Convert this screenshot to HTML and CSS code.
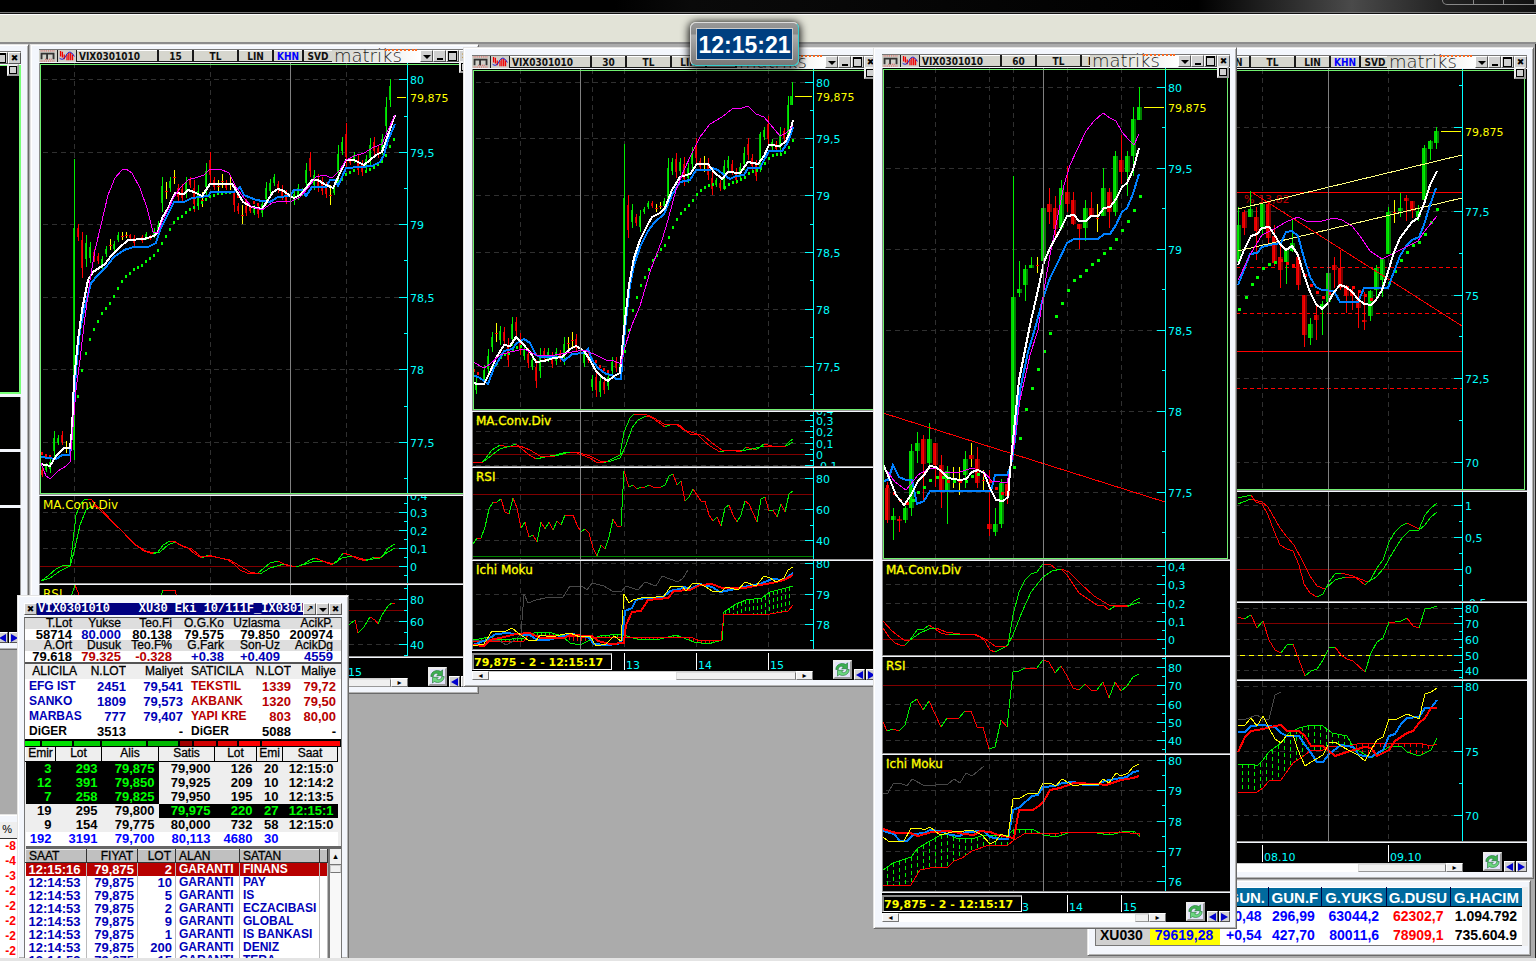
FILE: index.html
```
<!DOCTYPE html>
<html lang="tr">
	<head>
		<meta charset="UTF-8">
		<title>Matriks</title>
		<link rel="stylesheet" href="styles.css">
	</head>
	<body>
		<svg class="defs" width="0" height="0">
			<symbol id="ico-m" viewBox="0 0 18 13">
				<path d="M1 1h16" stroke="#e04040" stroke-dasharray="1 1"/>
				<path d="M1 12h16M6 10h7" stroke="#e04040" stroke-dasharray="1 1"/>
				<path d="M2 10V4h13v6M8 4v6" fill="none" stroke="#333" stroke-width="2"/>
			</symbol>
			<symbol id="ico-wave" viewBox="0 0 18 13">
				<path d="M2 1v6M4 2v6M6 5v5M9 5v6M11 3v8M13 3v8M15 5v6" stroke="#f00000" stroke-width="1.4"/>
				<path d="M1 9c3 2 5 1 7-3s5-6 9 1" fill="none" stroke="#0000d0"/>
			</symbol>
			<symbol id="ico-refresh" viewBox="0 0 18 18">
				<path d="M1 9C1 3 8 0 13 3l2-2v7H8l2-2C7 4 4 6 4 9z" fill="#3cb050" stroke="#1c7030" stroke-width=".7"/>
				<path d="M17 9c0 6-7 9-12 6l-2 2v-7h7l-2 2c3 2 6 0 6-3z" fill="#6cd880" stroke="#1c7030" stroke-width=".7"/>
			</symbol>
		</svg>

		<div class="topbar"><div class="syscontrols"><i></i><i></i><i></i></div></div>
		<div class="toolbar"></div>

		<div class="desktop">
			<div class="win win-left">
				<div class="head"><button class="hb max"></button><button class="hb">&#10006;</button></div>
				<div class="leftpane leftprice"><button class="square"></button></div>
				<div class="leftpane p1"></div>
				<div class="leftpane p2"></div>
				<div class="leftpane p3"></div>
				<div class="nav"><button class="arrow prev"></button><button class="arrow next"></button></div>
			</div>

			<div class="win win-list">
				<table>
					<thead><tr><th>%</th></tr></thead>
					<tbody>
						<tr><td>-8</td></tr>
						<tr><td>-4</td></tr>
						<tr><td>-3</td></tr>
						<tr><td>-2</td></tr>
						<tr><td>-2</td></tr>
						<tr><td>-2</td></tr>
						<tr><td>-2</td></tr>
						<tr><td>-2</td></tr>
					</tbody>
				</table>
			</div>

			<div class="win chart win-15" data-chart="c15">
				<div class="head">
					<div class="tabs">
						<svg class="hi"><use href="#ico-m"/></svg><svg class="hi"><use href="#ico-wave"/></svg>
						<button class="name">VIX0301010</button><button class="tf">15</button><button class="cur">TL</button><button class="lin">LIN</button><button class="khn">KHN</button><button class="svd">SVD</button>
					</div>
					<div class="logo">matriks</div>
					<button class="hb down"></button><button class="hb min"></button><button class="hb max"></button><button class="hb">&#10006;</button>
				</div>
				<button class="square"></button>
				<div class="panes"></div>
				<div class="foot">
					<div class="timeline">
						<div class="scroll"><button>&#9666;</button><span class="track"><span class="thumb"></span></span><button>&#9656;</button></div>
					</div>
					<div class="nav"><button class="refresh"><svg><use href="#ico-refresh"/></svg></button><button class="arrow prev"></button><button class="arrow next"></button></div>
				</div>
			</div>

			<div class="win chart win-30" data-chart="c30">
				<div class="head">
					<div class="tabs">
						<svg class="hi"><use href="#ico-m"/></svg><svg class="hi"><use href="#ico-wave"/></svg>
						<button class="name">VIX0301010</button><button class="tf">30</button><button class="cur">TL</button><button class="lin">LIN</button><button class="khn">KHN</button><button class="svd">SVD</button>
					</div>
					<div class="logo">matriks</div>
					<button class="hb down"></button><button class="hb min"></button><button class="hb max"></button><button class="hb">&#10006;</button>
				</div>
				<button class="square"></button>
				<div class="panes"></div>
				<div class="foot">
					<div class="timeline">
						<div class="last">79,875 - 2 - 12:15:17</div>
						<div class="scroll"><button>&#9666;</button><span class="track"><span class="thumb wide"></span></span><button>&#9656;</button></div>
					</div>
					<div class="nav"><button class="refresh"><svg><use href="#ico-refresh"/></svg></button><button class="arrow prev"></button><button class="arrow next"></button></div>
				</div>
			</div>

			<div class="win win-index">
				<table>
					<colgroup><col class="i1"><col class="i2"><col class="i3"><col class="i4"><col class="i5"><col class="i5"><col class="i7"></colgroup>
					<thead><tr><th></th><th></th><th>GUN.</th><th>GUN.F</th><th>G.YUKS</th><th>G.DUSU</th><th>G.HACIM</th></tr></thead>
					<tbody>
						<tr><td class="sym"></td><td></td><td>+0,48</td><td>296,99</td><td>63044,2</td><td class="red">62302,7</td><td class="blk">1.094.792</td></tr>
						<tr><td class="sym">XU030</td><td class="hot">79619,28</td><td>+0,54</td><td>427,70</td><td>80011,6</td><td class="red">78909,1</td><td class="blk">735.604.9</td></tr>
					</tbody>
				</table>
			</div>

			<div class="win chart win-day" data-chart="cday">
				<div class="head">
					<div class="tabs">
						<svg class="hi"><use href="#ico-m"/></svg><svg class="hi"><use href="#ico-wave"/></svg>
						<button class="name">VIX0301010</button><button class="tf">SEN</button><button class="cur">TL</button><button class="lin">LIN</button><button class="khn">KHN</button><button class="svd">SVD</button>
					</div>
					<div class="logo">matriks</div>
					<button class="hb down"></button><button class="hb min"></button><button class="hb max"></button><button class="hb">&#10006;</button>
				</div>
				<button class="square"></button>
				<div class="panes"></div>
				<div class="foot">
					<div class="timeline">
						<div class="scroll"><button>&#9666;</button><span class="track"><span class="thumb mid"></span></span><button>&#9656;</button></div>
					</div>
					<div class="nav"><button class="refresh"><svg><use href="#ico-refresh"/></svg></button><button class="arrow prev"></button><button class="arrow next"></button></div>
				</div>
			</div>

			<div class="win chart win-60" data-chart="c60">
				<div class="head">
					<div class="tabs">
						<svg class="hi"><use href="#ico-m"/></svg><svg class="hi"><use href="#ico-wave"/></svg>
						<button class="name">VIX0301010</button><button class="tf">60</button><button class="cur">TL</button><button class="lin">LIN</button>
					</div>
					<div class="logo">matriks</div>
					<button class="hb down"></button><button class="hb min"></button><button class="hb max"></button><button class="hb">&#10006;</button>
				</div>
				<button class="square"></button>
				<div class="panes"></div>
				<div class="foot">
					<div class="timeline">
						<div class="last">79,875 - 2 - 12:15:17</div>
						<div class="scroll"><button>&#9666;</button><span class="track"><span class="thumb small"></span></span><button>&#9656;</button></div>
					</div>
					<div class="nav"><button class="refresh"><svg><use href="#ico-refresh"/></svg></button><button class="arrow prev"></button><button class="arrow next"></button></div>
				</div>
			</div>

			<div class="win win-order">
				<div class="ohead">
					<button class="hb">&#10006;</button>
					<div class="otitle">VIX0301010&nbsp;&nbsp;&nbsp;&nbsp;XU30 Eki 10/111F_IX03010</div>
					<button class="hb">&#8599;</button><button class="hb down"></button><button class="hb">&#10006;</button>
				</div>
				<div class="obody">
					<table class="info">
						<colgroup><col class="a1"><col class="a2"><col class="a3"><col class="a4"><col class="a5"><col class="a6"></colgroup>
						<tr class="lbl"><th>T.Lot</th><th>Yukse</th><th>Teo.Fi</th><th>O.G.Ko</th><th>Uzlasma</th><th>AcikP.</th></tr>
						<tr><td>58714</td><td class="blue">80.000</td><td>80.138</td><td>79.575</td><td>79.850</td><td>200974</td></tr>
						<tr class="lbl"><th>A.Ort</th><th>Dusuk</th><th>Teo.F%</th><th>G.Fark</th><th>Son-Uz</th><th>AcikDg</th></tr>
						<tr><td>79.618</td><td class="red">79.325</td><td class="red">-0.328</td><td class="blue">+0.38</td><td class="blue">+0.409</td><td class="blue">4559</td></tr>
					</table>
					<table class="broker">
						<colgroup><col class="b1"><col class="b2"><col class="b3"><col class="b4"><col class="b5"><col class="b6"></colgroup>
						<tr class="lbl"><th>&nbsp;ALICILA</th><th>N.LOT</th><th>Maliyet</th><th>SATICILA</th><th>N.LOT</th><th>Maliye</th></tr>
						<tr><td class="blue">EFG IST</td><td class="blue">2451</td><td class="blue">79,541</td><td class="red">TEKSTIL</td><td class="red">1339</td><td class="red">79,72</td></tr>
						<tr><td class="blue">SANKO</td><td class="blue">1809</td><td class="blue">79,573</td><td class="red">AKBANK</td><td class="red">1320</td><td class="red">79,50</td></tr>
						<tr><td class="blue">MARBAS</td><td class="blue">777</td><td class="blue">79,407</td><td class="red">YAPI KRE</td><td class="red">803</td><td class="red">80,00</td></tr>
						<tr><td>DiGER</td><td>3513</td><td>-</td><td>DiGER</td><td>5088</td><td>-</td></tr>
					</table>
					<div class="balance">
						<i class="g1" style="flex-grow:15"></i><i class="g2" style="flex-grow:30"></i><i class="g3" style="flex-grow:26"></i><i class="g3" style="flex-grow:44"></i><i class="g4" style="flex-grow:30"></i><i class="r1" style="flex-grow:12"></i><i class="r2" style="flex-grow:22"></i><i class="r3" style="flex-grow:19"></i><i class="r4" style="flex-grow:21"></i><i class="r4" style="flex-grow:78"></i>
					</div>
					<table class="depth">
						<colgroup><col class="d1"><col class="d2"><col class="d3"><col class="d4"><col class="d5"><col class="d6"><col class="d7"><col></colgroup>
						<thead><tr><th>Emir</th><th>Lot</th><th>Alis</th><th>Satis</th><th>Lot</th><th>Emi</th><th>Saat</th></tr></thead>
						<tbody>
							<tr><td class="on">3</td><td class="on">293</td><td class="on">79,875</td><td>79,900</td><td>126</td><td>20</td><td>12:15:0</td></tr>
							<tr><td class="on">12</td><td class="on">391</td><td class="on">79,850</td><td>79,925</td><td>209</td><td>10</td><td>12:14:2</td></tr>
							<tr><td class="on">7</td><td class="on">258</td><td class="on">79,825</td><td>79,950</td><td>195</td><td>10</td><td>12:13:5</td></tr>
							<tr><td>19</td><td>295</td><td>79,800</td><td class="on">79,975</td><td class="on">220</td><td class="on">27</td><td class="on">12:15:1</td></tr>
							<tr><td>9</td><td>154</td><td>79,775</td><td>80,000</td><td>732</td><td>58</td><td>12:15:0</td></tr>
							<tr class="sum"><td>192</td><td>3191</td><td>79,700</td><td>80,113</td><td>4680</td><td>30</td><td></td></tr>
						</tbody>
					</table>
					<div class="tapewrap">
						<table class="tape">
							<colgroup><col class="t1"><col class="t2"><col class="t3"><col class="t4"><col class="t5"><col class="t6"></colgroup>
							<thead><tr><th>SAAT</th><th>FIYAT</th><th>LOT</th><th>ALAN</th><th>SATAN</th><th></th></tr></thead>
							<tbody>
								<tr class="sel"><td>12:15:16</td><td>79,875</td><td>2</td><td>GARANTI</td><td>FINANS</td><td></td></tr>
								<tr><td>12:14:53</td><td>79,875</td><td>10</td><td>GARANTI</td><td>PAY</td><td></td></tr>
								<tr><td>12:14:53</td><td>79,875</td><td>5</td><td>GARANTI</td><td>IS</td><td></td></tr>
								<tr><td>12:14:53</td><td>79,875</td><td>2</td><td>GARANTI</td><td>ECZACIBASI</td><td></td></tr>
								<tr><td>12:14:53</td><td>79,875</td><td>9</td><td>GARANTI</td><td>GLOBAL</td><td></td></tr>
								<tr><td>12:14:53</td><td>79,875</td><td>1</td><td>GARANTI</td><td>IS BANKASI</td><td></td></tr>
								<tr><td>12:14:53</td><td>79,875</td><td>200</td><td>GARANTI</td><td>DENIZ</td><td></td></tr>
								<tr><td>12:14:53</td><td>79,875</td><td>15</td><td>GARANTI</td><td>TERA</td><td></td></tr>
							</tbody>
						</table>
						<div class="vscroll"><button>&#9652;</button><span></span></div>
					</div>
				</div>
			</div>
		</div>
		<div class="status"></div>
		<div class="clock"><span>12:15:21</span></div>
		<script src="charts.js"></script>
	</body>
</html>
```
FILE: styles.css
```
*{
	box-sizing: border-box;
}
body{
	margin: 0;
	height: 100vh;
	overflow: hidden;
	display: flex;
	flex-direction: column;
	position: relative;
	background: #ababab;
	font-family: "Liberation Sans", sans-serif;
}
button{
	margin: 0;
	padding: 0;
	border: 0;
	font: inherit;
	color: inherit;
	background: #d6d6ce;
}
table{
	border-collapse: collapse;
	table-layout: fixed;
}
th,td{
	padding: 0;
	white-space: nowrap;
	overflow: hidden;
}
.defs{
	position: absolute;
}
.topbar{
	height: 14px;
	flex: none;
	background: linear-gradient(90deg,#000 0,#000 40%,#0a0a0a 45%,#000 78%,#4a4a4a 88%,#222 94%,#111 100%);
	border-bottom: 1px solid #111;
	box-shadow: inset 0 -1px 0 #777;
}
.syscontrols{
	display: flex;
	width: 94px;
	height: 5px;
	margin-left: auto;
	border: 1px solid #888;
	border-top: 0;
	border-radius: 0 0 0 5px;
}
.syscontrols i{
	flex: 1;
	border-right: 1px solid #888;
}
.toolbar{
	height: 30px;
	flex: none;
	background: #e2e3d7;
	border-top: 1px solid #fff;
	border-bottom: 2px solid #8c8c8c;
}
.desktop{
	flex: 1;
	position: relative;
	overflow: hidden;
	background: #ababab;
	border-right: 1px solid #222;
}
.status{
	height: 3px;
	flex: none;
	background: #e4e4e4;
}

/* windows */
.win{
	position: absolute;
	background: #f3f6fc;
	border: 1px solid #e3e3e3;
	border-right-color: #6a6a6a;
	border-bottom-color: #6a6a6a;
	box-shadow: inset 1px 1px 0 #fff, inset -1px -1px 0 #b4b4b4;
}
.chart{
	padding: 7px 6px 6px 8px;
}
.win-15{
	left: 30px;
	top: 0;
	width: 449px;
	padding-top: 4px;
}
.win-30{
	left: 463px;
	top: 3px;
	width: 421px;
}
.win-60{
	left: 873px;
	top: 3px;
	width: 364px;
	padding-top: 6px;
}
.win-day{
	left: 1087px;
	top: 3px;
	width: 447px;
}
.head{
	display: flex;
	height: 13px;
	margin-bottom: 1px;
	background: #1a1a1a;
	border-top: 1px solid #777;
	font: bold 10px/12px "DejaVu Sans Condensed", "DejaVu Sans", sans-serif;
}
.tabs{
	flex: 1;
	display: flex;
	overflow: hidden;
}
.tabs button{
	flex: none;
	margin-right: 2px;
	height: 11px;
	line-height: 12px;
	overflow: hidden;
	border-top: 1px solid #fff;
	color: #111;
}
.hi{
	flex: none;
	width: 18px;
	height: 12px;
	margin-right: 1px;
	background: #cfcfc8;
}
.tabs .name{
	width: 80px;
	padding-left: 2px;
	text-align: left;
}
.tabs .tf{
	width: 33px;
}
.tabs .cur{
	width: 43px;
}
.tabs .lin{
	width: 33px;
}
.win-60 .tabs .lin{
	padding-left: 6px;
	text-align: left;
}
.tabs .khn{
	width: 28px;
	color: #00f;
}
.tabs .svd{
	width: 28px;
}
.logo{
	flex: none;
	width: 88px;
	height: 12px;
	padding-left: 2px;
	background: linear-gradient(90deg,#d4d4cc,#fff);
	color: #222;
	font: 200 18px/11px "DejaVu Sans", sans-serif;
	position: relative;
}
.logo::after{
	content: "";
	position: absolute;
	left: 53px;
	top: -1px;
	width: 32px;
	border-top: 2px dotted #ff6a20;
}
.hb{
	flex: none;
	width: 13px;
	height: 12px;
	border: 1px solid #fff;
	border-right-color: #555;
	border-bottom-color: #555;
	background: #d0d0d0;
	color: #000;
	font: bold 9px/9px "DejaVu Sans", sans-serif;
	text-align: center;
	overflow: hidden;
}
.down::before{
	content: "";
	display: block;
	margin: 1px auto 0;
	width: 0;
	border: 4px solid transparent;
	border-top-color: #000;
	border-bottom: 0;
}
.min::before{
	content: "";
	display: block;
	width: 6px;
	height: 2px;
	margin: 6px auto 0;
	background: #000;
}
.max::before{
	content: "";
	display: block;
	width: 7px;
	height: 7px;
	margin: 0 auto;
	border: 1px solid #000;
	border-top-width: 2px;
}
.square{
	position: absolute;
	right: 7px;
	margin-top: -2px;
	width: 12px;
	height: 12px;
	border: 2px outset #eee;
	background: #d0d0d0;
}
.square::before{
	content: "";
	display: block;
	width: 6px;
	height: 6px;
	margin: 0 auto;
	border: 1px solid #000;
}
.pane{
	display: block;
	width: 100%;
	background: #000;
	shape-rendering: crispEdges;
	font: 11px "DejaVu Sans", sans-serif;
}
.panes .pane{
	margin-bottom: 2px;
	box-shadow: 0 1px 0 #999;
}
.title,.thin{
	font-size: 12px;
}
.title{
	stroke: #ff0;
	stroke-width: .3px;
}
.foot{
	display: flex;
	height: 29px;
	background: #000;
}
.timeline{
	flex: 1;
	position: relative;
	display: flex;
	flex-direction: column;
}
.timeline .pane{
	overflow: visible;
}
.last{
	position: absolute;
	left: 0;
	top: 2px;
	width: 140px;
	height: 17px;
	background: #000;
	border: 1px solid #fff;
	border-top: 2px solid #8a8a8a;
	border-left: 2px solid #8a8a8a;
	color: #ff0;
	font: bold 11px/15px "DejaVu Sans", sans-serif;
	white-space: nowrap;
	overflow: hidden;
}
.scroll{
	display: flex;
	height: 9px;
	margin-top: auto;
}
.scroll button{
	width: 17px;
	background: #f0f0f0;
	border: 1px solid #fff;
	border-right-color: #777;
	border-bottom-color: #777;
	font: 8px/7px "DejaVu Sans", sans-serif;
}
.track{
	flex: 1;
	display: flex;
	background: #fff;
	border-top: 1px solid #ccc;
}
.thumb{
	width: 90px;
	margin-left: auto;
	background: #f0f0f0;
	border: 1px solid #ddd;
	border-right-color: #777;
	border-bottom-color: #999;
}
.thumb.wide{
	width: 120px;
}
.thumb.mid{
	width: 88px;
}
.thumb.small{
	width: 14px;
}
.nav{
	flex: none;
	display: flex;
	align-items: flex-end;
	justify-content: flex-end;
	gap: 1px;
	width: 64px;
}
.refresh{
	width: 19px;
	height: 19px;
	margin: 0 1px 1px 0;
	border: 2px outset #eee;
	background: #e4e4fa;
}
.refresh svg{
	display: block;
	width: 15px;
	height: 15px;
}
.arrow{
	width: 11px;
	height: 11px;
	border: 1px solid #fff;
	border-right-color: #555;
	border-bottom-color: #555;
	background: #d0d0d0;
}
.arrow::before{
	content: "";
	display: block;
	width: 0;
	margin: 0 auto;
	border: 4px solid transparent;
}
.prev::before{
	border-right: 7px solid #00c;
	border-left: 0;
}
.next::before{
	border-left: 7px solid #00c;
	border-right: 0;
}

/* clipped windows at the left edge */
.win-left{
	left: -60px;
	top: 0;
	width: 89px;
	padding: 6px 7px 6px;
}
.win-left .head{
	justify-content: flex-end;
}
.win-left .square{
	right: 9px;
}
.leftpane{
	margin-bottom: 3px;
	background: #000;
	border-right: 1px solid #999;
}
.leftprice{
	height: 329px;
	border: 1px solid #7f7;
	border-width: 1px 2px 2px 0;
}
.p1{
	height: 52px;
}
.p2{
	height: 53px;
}
.p3{
	height: 124px;
	margin-bottom: 0;
}
.win-left .nav{
	width: auto;
	padding-right: 1px;
	background: #000;
}
.win-list{
	left: -60px;
	top: 770px;
	width: 85px;
	height: 140px;
	padding: 7px 6px 0;
	font: bold 12px/15px "Liberation Sans", sans-serif;
}
.win-list table{
	width: 100%;
	background: #fff;
}
.win-list th{
	height: 16px;
	padding-right: 6px;
	background: #eee;
	border-bottom: 1px solid #333;
	text-align: right;
	font-weight: normal;
	font-size: 11px;
}
.win-list td{
	height: 15px;
	padding-right: 2px;
	color: #f00;
	text-align: right;
}

/* index table */
.win-index{
	left: 1087px;
	top: 836px;
	width: 444px;
	height: 76px;
	padding: 6px 4px 6px 7px;
}
.win-index table{
	width: 433px;
	background: #fff;
	border: 1px solid #777;
	border-right: 6px solid #eee;
	font: bold 14px/19px "Liberation Sans", sans-serif;
	color: #00f;
}
.win-index th{
	height: 19px;
	padding-right: 3px;
	background: #006a9e;
	border: 1px solid #fff;
	border-right-color: #004;
	border-bottom-color: #000;
	color: #fff;
	font-size: 15px;
	line-height: 17px;
	text-align: right;
}
.win-index td{
	height: 19px;
	padding-right: 7px;
	text-align: right;
}
.win-index .sym{
	background: #d0d0d0;
	color: #000;
}
.win-index .hot{
	background: #ff0;
}
.win-index .red{
	color: #f00;
}
.win-index .blk{
	padding-right: 5px;
	color: #000;
}
.i1{
	width: 54px;
}
.i2{
	width: 70px;
}
.i3{
	width: 48px;
}
.i4{
	width: 53px;
}
.i5{
	width: 64px;
}
.i7{
	width: 74px;
}

/* order book */
.win-order{
	left: 17px;
	top: 551px;
	bottom: 0;
	width: 332px;
	padding: 7px 6px 0;
	border-bottom: 0;
	overflow: hidden;
}
.ohead{
	display: flex;
	height: 12px;
	background: navy;
}
.otitle{
	flex: 1;
	padding-left: 1px;
	color: #fff;
	font: bold 12px/12px "Liberation Mono", monospace;
	white-space: nowrap;
	overflow: hidden;
}
.obody{
	margin-top: 2px;
	background: #fff;
	border: 1px solid #777;
	border-top: 1px solid #555;
	font: bold 12px/14px "Liberation Sans", sans-serif;
	color: #000;
}
.obody table{
	width: 100%;
}
.blue{
	color: #0000b8;
}
.obody .red{
	color: #b80000;
}
.obody th{
	font-weight: normal;
	-webkit-text-stroke: .3px #000;
}
.info{
	border-bottom: 2px solid #555;
}
.info th,.info td{
	height: 11px;
	font-size: 12px;
	line-height: 12px;
	text-align: right;
	padding-right: 1px;
}
.info td{
	font-size: 13px;
	line-height: 11px;
}
.info .lbl{
	background: #dedede;
}
.info th{
	line-height: 11px;
}
.info th:last-child,.info td:last-child{
	padding-right: 8px;
}
.a1{
	width: 48px;
}
.a2{
	width: 49px;
}
.a3{
	width: 51px;
}
.a4{
	width: 52px;
}
.a5{
	width: 56px;
}
.broker th,.broker td{
	height: 15px;
	line-height: 15px;
	text-align: right;
}
.broker td{
	font-size: 13px;
}
.broker .lbl{
	background: #eee;
}
.broker th:nth-child(3n+1),.broker td:nth-child(3n+1){
	font-size: 12px;
	text-align: left;
	padding-left: 4px;
}
.broker th:nth-child(4),.broker td:nth-child(4){
	padding-left: 8px;
}
.broker th:last-child,.broker td:last-child{
	padding-right: 5px;
}
.b1{
	width: 59px;
}
.b2{
	width: 42px;
}
.b3{
	width: 57px;
}
.b4{
	width: 68px;
}
.b5{
	width: 40px;
}
.balance{
	display: flex;
	gap: 2px;
	height: 8px;
	padding: 2px 1px 1px 0;
	background: #000;
}
.balance i{
	flex-basis: 0;
}
.g1{
	background: #00f800;
}
.g2{
	background: #00e000;
}
.g3{
	background: #00cc00;
}
.g4{
	background: #00b800;
}
.r1{
	background: #a00000;
}
.r2{
	background: #d00000;
}
.r3{
	background: #e00000;
}
.r4{
	background: #f00;
}
.depth{
	background: #eee;
	border-bottom: 3px solid #666;
}
.depth th{
	height: 14px;
	line-height: 13px;
	border: 1px solid #fff;
	border-width: 0 1px 1px 1px;
	border-right-color: #000;
	border-bottom-color: #000;
}
.depth td{
	height: 14px;
	font-size: 13px;
	line-height: 14px;
	padding-right: 4px;
	text-align: right;
}
.depth .on{
	background: #000;
	color: #0f0;
}
.depth .sum{
	background: #fff;
	color: #00f;
}
.d1{
	width: 30px;
}
.d2{
	width: 46px;
}
.d3{
	width: 57px;
}
.d4{
	width: 56px;
}
.d5{
	width: 42px;
}
.d6{
	width: 26px;
}
.d7{
	width: 55px;
}
.tapewrap{
	display: flex;
}
.obody .tape{
	width: 303px;
	flex: none;
	color: #0000b8;
}
.tape th{
	height: 13px;
	line-height: 12px;
	padding: 0 4px 0 3px;
	background: #c0c0c0;
	border: 1px solid #eee;
	border-right-color: #333;
	border-bottom-color: #333;
	color: #000;
	text-align: left;
}
.tape td{
	height: 13px;
	line-height: 13px;
	padding: 0 3px;
	border-right: 1px solid #bbb;
}
.tape td:nth-child(-n+3){
	font-size: 13px;
}
.tape tr > :nth-child(2),.tape tr > :nth-child(3){
	text-align: right;
}
.sel td{
	background: #b80000;
	color: #fff;
}
.t1{
	width: 61px;
}
.t2{
	width: 51px;
}
.t3{
	width: 38px;
}
.t4{
	width: 64px;
}
.t5{
	width: 80px;
}
.vscroll{
	flex: 1;
	display: flex;
	flex-direction: column;
	background: #f8f8f8;
	border-left: 2px solid #777;
}
.vscroll button{
	height: 16px;
	background: #f0f0f0;
	border-bottom: 1px solid #777;
	font: 9px/14px "DejaVu Sans", sans-serif;
}
.vscroll span{
	height: 8px;
	border: 1px solid #ccc;
	border-bottom-color: #777;
	background: #f0f0f0;
}

.clock{
	position: absolute;
	left: 690px;
	top: 22px;
	width: 109px;
	height: 44px;
	padding: 5px;
	border: 1px solid #ddd;
	border-right-color: #3cc;
	border-bottom-color: #3cc;
	border-radius: 6px;
	background: linear-gradient(#999,#888 25%,#aaa 30%,#777);
	box-shadow: 0 1px 9px 1px #000;
}
.clock span{
	display: block;
	height: 32px;
	border: 1px solid #ccc;
	background: #003f80;
	color: #fff;
	font: bold 23px/33px "Liberation Sans", sans-serif;
	text-align: center;
}
```
FILE: charts.js
```
var RED="#f00",GREEN="#00f000",BLUE="#0080ff",WHITE="#fff",MAG="#f0f",YEL="#ff0",CYAN="#0ff",GRAY="#484848";

//mum satiri: x high low [bodyTop bodyBottom] renk
var charts={
	c15:{
		x0:39,x1:472,axis:407,cross:290,v:[74,210,346],body:2,len:10,foot:657,times:[[346,"15"]],
		panes:[
			{top:63,bottom:494,main:true,
				ticks:[[79,"80"],[152,"79,5"],[224,"79"],[297,"78,5"],[369,"78"],[442,"77,5"]],minor:[116,188,260,333,406,478],last:97,
				candles:"42 467 477 r,46 463 472 g,50 458 473 g,54 431 458 g,58 435 445 g,62 431 445 r,66 441 453 y,74 159 460 228 450 g,78 224 241 r,82 232 278 240 268 r,86 235 267 g,90 242 263 g,94 249 262 r,98 253 264 r,102 256 269 g,106 246 257 g,110 239 250 y,114 241 252 g,118 232 242 g,122 232 240 y,126 232 238 y,130 234 239 r,134 235 246 r,142 235 243 r,146 232 240 g,150 235 240 r,154 228 238 g,158 221 235 g,162 177 212 g,166 182 199 y,170 177 192 g,174 170 184 y,178 184 201 r,182 184 203 r,186 177 198 g,190 177 188 r,194 180 212 r,198 185 210 g,202 192 207 y,206 163 195 g,210 152 183 r,214 177 190 r,218 180 192 y,222 174 188 y,226 180 190 r,230 177 190 y,234 185 212 r,238 203 214 r,242 205 224 y,246 202 216 r,250 205 213 r,254 205 215 g,258 203 218 r,262 200 217 g,266 182 205 g,270 179 195 g,274 174 186 g,278 181 193 r,282 185 200 r,286 190 204 r,290 192 209 y,294 190 205 g,298 184 200 g,302 188 196 g,306 163 190 g,310 152 177 r,314 170 190 g,318 174 192 r,322 177 195 r,326 182 198 r,330 185 205 y,334 185 195 g,338 145 182 g,342 137 155 g,346 123 168 r,350 157 165 r,354 152 163 g,358 155 175 r,362 160 176 r,366 155 170 g,370 138 165 g,374 137 155 r,378 145 158 r,382 134 155 g,386 97 135 g,390 79 107 g",
				dots:[["g","74,425 78,396 82,370 86,353 90,339 94,329 98,321 102,313 106,308 110,303 114,296 118,288 122,281 126,276 130,273 134,269 138,267 142,265 146,261 150,258 154,255 158,250 162,243 166,236 170,229 174,222 178,218 182,216 186,212 190,209 194,207 198,204 202,202 206,199 210,196 214,195 218,193 222,193 226,192 230,192 338,182 342,179 346,174 350,172 354,170 366,171 370,169 374,167 378,164 382,161 386,155 390,146 394,139"],["r","42,453 46,455 50,456 238,196 246,200 254,202 258,204"]],
				lines:[
					[BLUE,2,"41,457 56,459 62,455 70,455 73,420 76,370 80,330 84,310 91,283 98,275 106,267 114,257 124,250 134,247 148,247 156,243 160,230 166,218 174,202 184,202 192,198 208,196 211,192 234,192 240,187 244,195 256,200 270,202 278,197 290,196 294,190 302,190 306,196 312,187 326,187 330,180 335,180 338,186 346,168 360,167 372,166 380,162 384,155 388,140 392,131 395,124"],
					[WHITE,2,"41,464 50,466 56,456 64,448 70,448 72,430 74,380 78,340 82,310 88,280 93,272 105,264 111,256 118,249 128,240 144,239 154,236 158,232 162,218 168,208 175,193 184,194 188,190 194,192 202,196 210,184 232,184 236,190 243,202 252,207 262,209 268,200 273,192 278,189 284,191 290,196 294,198 300,195 306,188 312,180 318,180 324,184 333,188 340,173 346,160 354,160 364,165 370,160 376,155 382,152 388,135 395,115"],
					[MAG,1,"41,463 46,476 50,479 58,471 66,466 70,462 72,440 76,390 80,360 84,325 90,280 95,250 101,225 108,195 115,178 122,170 126,169 132,173 140,188 147,208 153,232 158,233 162,222 168,210 174,197 180,188 188,180 198,177 204,175 210,169 220,169 229,173 236,187 244,198 252,207 262,210 272,203 280,201 290,202 300,197 308,188 316,177 324,175 332,178 340,170 346,160 354,156 364,153 374,147 382,144 388,130 395,115"]
				]},
			{top:496,bottom:583,title:"MA.Conv.Div",thin:true,
				ticks:[[495,"0,4"],[512,"0,3"],[530,"0,2"],[548,"0,1"],[566,"0"]],minor:[503,521,539,557,575],
				levels:[[566,"#800000"]],
				updown:["41,581 48,576 56,569 62,566 70,565 72,550 76,515 80,505 84,500 88,499 92,500 98,508 110,520 122,531 134,544 144,551 153,554 158,552 163,545 170,541 175,541 178,544 188,548 195,554 202,558 208,555 216,557 228,560 234,564 240,570 247,573 258,573 264,568 270,563 278,561 286,565 296,567 304,564 310,560 315,558 320,560 332,565 338,560 343,553 350,555 358,559 366,561 374,557 382,557 388,548 395,544","41,581 50,578 60,571 70,566 74,552 80,525 86,510 92,506 100,508 112,521 124,533 136,545 146,551 154,553 160,552 168,545 175,542 184,547 192,549 200,556 210,556 230,560 240,566 250,572 260,574 270,568 284,564 296,567 312,562 322,561 334,564 342,558 352,556 366,560 380,558 388,552 395,548"]},
			{top:585,bottom:656,title:"RSI",thin:true,
				ticks:[[599,"80"],[621,"60"],[644,"40"]],minor:[588,610,632,655],
				levels:[[610,"#800000"]],
				updown:["70,600 75,585 80,597","160,600 163,590 175,590 177,598","340,625 350,624 355,620 358,633 364,627 370,617 375,620 378,624 382,615 388,606 392,603 395,603"]}
		]
	},
	c30:{
		x0:472,x1:877,axis:813,cross:580,v:[520,592,624,696,768],body:2,len:18,foot:650,times:[[624,"13"],[696,"14"],[768,"15"]],
		panes:[
			{top:69,bottom:410,main:true,
				ticks:[[82,"80"],[138,"79,5"],[195,"79"],[252,"78,5"],[309,"78"],[366,"77,5"]],minor:[110,167,224,280,337,394],last:96,
				candles:"476 378 394 g,484 365 385 g,488 349 375 g,492 332 352 g,496 323 342 y,500 326 345 g,504 327 346 r,508 338 367 r,512 317 346 g,516 317 336 r,520 333 355 r,524 345 360 g,528 349 368 r,532 356 370 g,536 360 388 r,540 348 378 g,544 348 360 r,548 348 362 g,552 352 368 r,556 348 365 g,560 350 362 r,564 337 365 g,568 337 349 y,572 332 347 y,576 334 352 r,584 350 367 g,588 352 363 r,592 375 391 g,596 370 397 r,600 376 397 g,604 378 394 r,608 372 390 g,612 357 375 g,616 357 372 r,620 360 375 g,624 144 350 198 348 g,628 195 238 205 230 r,632 204 228 g,636 214 226 r,640 210 232 g,644 207 214 g,648 201 209 g,652 201 208 r,656 204 212 y,660 202 209 y,664 198 208 g,668 158 202 168 202 g,672 158 175 g,676 153 178 r,680 158 175 g,684 157 186 r,688 163 183 g,692 147 170 g,696 138 164 r,700 158 170 r,704 156 172 y,708 158 180 r,712 172 195 r,716 178 187 g,720 180 191 r,724 160 190 166 189 g,728 156 172 g,732 160 175 r,736 168 184 r,740 163 180 g,744 147 170 g,748 138 160 r,752 154 170 r,756 160 181 r,760 132 172 134 168 g,764 127 140 g,768 116 147 r,772 139 150 g,776 141 152 r,780 127 155 g,784 128 141 r,788 96 140 105 138 g,791 96 105 96 105 g,792 82 105 96 105 g",
				dots:[["g","625,351 629,330 633,310 637,297 641,285 645,277 649,269 653,260 657,255 661,249 665,245 669,237 673,227 677,219 681,213 685,209 689,205 693,200 697,194 701,190 705,187 709,185 713,184 725,187 729,184 733,182 737,181 741,179 745,177 749,173 753,171 757,170 761,168 765,163 769,158 773,155 777,154 781,154 785,152 789,147 793,140 489,373 493,367 497,363 501,357 505,354 509,353 513,349 517,347 521,346"],["r","474,370 478,373 528,349 536,354 596,361 600,366 604,369 608,371"]],
				lines:[
					[BLUE,2,"473,375 480,378 488,384 494,368 504,351 512,349 517,343 524,339 530,343 536,355 540,357 560,357 564,361 572,354 584,353 588,349 592,360 598,368 606,374 612,375 616,379 621,379 623,350 626,320 630,285 634,265 640,247 648,231 654,223 664,214 672,195 680,182 690,180 696,170 710,170 712,168 718,170 724,175 730,179 736,176 744,175 748,168 760,168 764,160 769,151 782,151 788,142 793,127"],
					[WHITE,2,"473,382 476,384 484,384 490,372 496,358 504,345 510,346 516,337 522,343 530,352 536,362 544,361 554,358 562,357 570,349 576,346 584,351 590,360 596,371 602,377 608,381 614,376 620,373 622,350 625,320 629,285 634,258 640,240 648,224 652,217 660,213 665,208 672,190 680,177 690,174 697,164 708,164 714,172 722,179 728,172 740,173 748,162 758,164 764,156 769,145 780,146 786,141 790,132 793,120"],
					[MAG,1,"473,362 484,368 490,364 500,355 510,352 524,349 536,355 550,356 566,353 584,350 596,355 606,360 614,361 621,364 624,350 632,325 640,306 650,272 662,240 668,220 676,190 684,170 692,153 700,137 710,124 722,117 732,109 742,108 748,106 756,114 764,117 770,124 780,136 786,133 793,126"]
				]},
			{top:412,bottom:466,title:"MA.Conv.Div",
				ticks:[[410,"0,4"],[420,"0,3"],[431,"0,2"],[443,"0,1"],[454,"0"],[465,"-0,1"]],minor:[415,426,437,449,460],
				levels:[[454,"#800000"]],
				updown:["473,462 481,463 486,458 492,450 500,445 508,447 516,444 522,449 528,454 536,459 545,457 556,455 566,452 574,452 582,455 590,458 596,462 604,463 612,459 620,455 624,432 630,418 634,414 644,414 650,416 658,422 665,427 672,424 678,424 684,429 690,434 697,434 704,441 710,446 720,452 728,450 736,451 742,451 746,447 756,450 764,444 772,446 785,446 789,442 793,439","473,462 483,462 492,455 500,449 510,446 520,446 530,450 540,456 555,456 570,452 580,453 590,456 600,461 608,462 620,458 626,445 632,428 638,420 646,416 654,418 664,424 676,424 684,430 694,433 704,436 712,443 722,450 740,451 752,449 764,446 786,446 793,442"]},
			{top:468,bottom:559,title:"RSI",
				ticks:[[478,"80"],[509,"60"],[540,"40"]],minor:[525],
				levels:[[494,"#800000"],[556,"#008000"]],
				updown:["473,544 477,538 481,538 485,527 489,509 493,502 497,502 501,499 505,512 509,514 513,498 517,508 521,528 525,522 529,537 533,535 537,542 541,522 545,529 549,522 553,530 557,521 561,525 565,515 573,515 577,525 581,532 585,529 589,533 593,548 597,556 601,545 605,549 609,537 613,519 617,526 621,526 624,471 629,487 633,485 637,489 641,487 645,487 649,485 653,487 661,487 665,485 669,476 673,474 677,485 681,481 685,501 689,497 693,489 697,495 701,501 705,501 709,515 713,521 717,517 721,526 725,508 729,505 733,515 737,522 741,515 745,501 749,504 753,513 757,522 761,499 765,497 769,511 773,510 777,517 781,504 785,512 789,494 793,491"]},
			{top:561,bottom:649,title:"Ichi Moku",
				ticks:[[563,"80"],[594,"79"],[624,"78"]],minor:[578,609,640],
				cloud:["473,640 490,637 500,640 524,638 536,632 552,633 562,636 570,643 580,645 590,640 600,636 620,634 640,640 660,639 676,635 694,642 708,644 722,640 724,612 736,604 746,600 762,598 770,592 782,589 793,586","473,641 524,641 528,635 560,636 580,637 620,638 640,637 690,637 698,640 721,640 724,614 770,614 788,611 793,605"],step:4,
				lines:[
					[GRAY,1,"473,640 500,641 506,645 515,640 521,634 524,594 528,603 536,600 545,598 563,597 570,586 582,586 587,590 592,583 604,586 612,591 621,592 626,586 638,590 645,582 656,586 662,576 678,582 683,578 688,570"],
					[BLUE,2,"473,645 486,640 496,634 508,633 514,634 530,635 537,640 548,640 560,637 572,634 588,637 594,644 606,645 618,644 622,640 625,611 632,608 636,600 645,598 662,598 670,591 680,589 684,587 690,589 700,584 712,587 720,592 740,588 752,585 760,584 772,579 784,580 793,573"],
					[RED,2,"473,645 484,646 490,640 504,637 516,634 530,633 540,638 564,638 570,635 592,636 598,641 610,644 624,643 626,625 632,612 641,611 648,600 668,598 674,591 690,590 700,585 712,584 722,588 744,588 760,585 772,583 784,580 793,575"],
					[YEL,1,"473,646 484,644 492,631 500,631 504,632 512,628 518,633 528,640 536,641 540,635 552,637 560,635 570,633 580,637 590,636 596,646 606,644 614,636 621,641 624,594 629,603 633,600 641,598 656,597 664,596 671,586 682,586 686,591 693,583 700,584 706,587 712,591 721,592 726,587 738,590 745,582 756,586 764,576 770,578 776,582 784,578 788,570 793,567"]
				]}
		]
	},
	c60:{
		x0:882,x1:1230,axis:1165,cross:1043,v:[935,989,1013,1067,1121],body:4,len:21,foot:892,times:[[1013,"13"],[1067,"14"],[1121,"15"]],
		panes:[
			{top:68,bottom:559,main:true,
				ticks:[[87,"80"],[168,"79,5"],[249,"79"],[330,"78,5"],[411,"78"],[492,"77,5"]],minor:[127,208,289,370,451,532],last:107,
				candles:"887 482 523 488 520 r,893 508 540 516 520 g,899 516 532 519 521 r,905 506 523 508 520 g,911 444 516 451 508 g,917 432 463 443 451 g,923 435 500 439 464 r,929 423 468 439 463 g,935 443 487 443 465 r,941 455 508 465 492 r,947 466 524 471 490 g,953 467 488 y,959 467 495 y,965 451 488 459 475 g,971 443 467 y,971 455 459 455 459 r,977 447 488 459 483 r,983 470 490 y,989 470 536 524 529 r,995 508 536 524 532 g,1001 479 528 483 524 g,1007 478 504 484 496 r,1013 176 445 297 443 g,1019 261 297 289 293 g,1025 265 301 269 285 g,1031 257 268 265 268 g,1037 257 273 y,1043 208 261 208 261 g,1049 188 224 204 212 r,1055 196 237 208 229 r,1061 180 230 188 228 g,1067 166 212 192 204 r,1073 192 225 200 224 r,1079 224 249 224 229 r,1085 200 241 208 228 g,1091 192 216 208 216 r,1097 204 232 y,1103 168 216 188 216 g,1109 188 228 192 212 r,1115 151 216 156 212 g,1121 135 184 160 172 r,1127 151 196 156 172 g,1133 107 176 119 156 g,1139 87 120 107 120 g",
				dots:[["g","1014,467 1020,438 1026,409 1032,388 1038,369 1044,351 1050,333 1056,316 1062,303 1068,290 1074,280 1080,276 1086,270 1092,264 1098,260 1104,253 1110,248 1116,239 1122,230 1128,221 1134,210 1140,196 913,500 918,492 924,487 930,480 937,477 943,477 954,481 966,481 972,476 978,474"],["r","887,486 894,493 900,500 907,503 948,481 960,481 984,475 990,481 996,488 1002,493 1008,493"]],
				lines:[
					[RED,1,"883,413 1165,502"],
					[BLUE,2,"883,481 888,480 893,465 899,477 906,480 912,480 917,504 924,501 930,491 991,491 995,475 1007,475 1011,465 1015,440 1020,390 1028,352 1036,325 1044,295 1050,278 1058,262 1067,243 1074,239 1098,239 1104,234 1110,234 1116,225 1122,212 1127,208 1133,194 1139,174"],
					[MAG,1,"883,466 895,482 906,490 918,475 928,469 936,468 944,473 960,472 972,468 984,472 992,481 1007,483 1012,460 1020,400 1030,355 1038,330 1044,290 1050,255 1058,215 1064,185 1070,165 1078,148 1086,131 1094,121 1103,113 1110,118 1116,121 1122,132 1128,139 1134,145 1139,134"],
					[WHITE,2,"883,464 890,480 896,495 904,505 911,495 918,481 924,475 930,466 936,467 942,472 948,478 960,480 966,479 972,472 978,470 984,473 990,488 996,500 1003,501 1008,497 1011,460 1015,420 1019,380 1024,355 1030,325 1038,290 1044,262 1050,248 1060,230 1067,216 1074,215 1079,221 1086,221 1091,216 1098,216 1104,208 1110,207 1116,199 1122,187 1127,183 1133,170 1139,148"]
				]},
			{top:561,bottom:655,title:"MA.Conv.Div",
				ticks:[[566,"0,4"],[584,"0,3"],[603,"0,2"],[621,"0,1"],[639,"0"]],minor:[575,594,612,630,648],
				levels:[[639,"#800000"]],
				updown:["883,628 889,637 895,643 900,645 905,645 910,640 917,630 924,629 929,625 935,629 941,633 949,635 962,634 972,634 980,637 985,641 990,650 995,652 1001,649 1008,645 1013,615 1019,592 1025,580 1031,574 1037,572 1043,564 1050,564 1056,569 1061,569 1067,575 1073,584 1079,593 1085,597 1091,601 1097,605 1103,605 1109,610 1115,606 1128,607 1134,601 1140,598","883,621 892,631 904,640 910,640 920,633 929,629 936,628 946,632 960,634 975,634 985,639 995,646 1007,646 1013,635 1022,612 1031,592 1043,577 1052,571 1061,569 1069,572 1080,583 1094,596 1109,605 1127,606 1134,604 1140,602"]},
			{top:657,bottom:753,title:"RSI",
				ticks:[[667,"80"],[685,"70"],[704,"60"],[722,"50"],[740,"40"]],minor:[658,676,694,713,731,749],
				levels:[[685,"#800000"]],
				updown:["883,722 887,731 893,729 899,731 905,725 911,703 917,699 923,710 929,701 935,714 941,727 947,718 959,718 965,711 971,711 977,727 983,727 989,749 995,747 1001,720 1007,727 1013,672 1019,671 1025,668 1037,668 1043,660 1049,662 1055,673 1061,666 1067,676 1073,688 1079,690 1085,684 1091,690 1097,690 1103,682 1109,698 1115,682 1121,691 1127,686 1133,677 1139,674"]},
			{top:755,bottom:891,title:"Ichi Moku",
				ticks:[[760,"80"],[790,"79"],[821,"78"],[851,"77"],[881,"76"]],minor:[775,805,836,866],
				cloud:["883,870 893,863 911,857 918,848 930,841 941,835 948,834 956,838 972,839 984,835 1008,835 1014,829 1032,829 1044,835 1056,837 1068,833 1090,832 1110,835 1126,831 1134,831 1140,837","883,885 911,885 920,870 935,867 948,867 954,861 962,858 972,851 989,845 1008,845 1014,840 1024,834 1060,833 1120,832 1140,834"],step:6,
				lines:[
					[GRAY,1,"883,794 888,793 893,784 900,783 907,786 912,779 925,786 948,784 954,779 960,783 966,773 972,776 984,766"],
					[BLUE,2,"883,831 894,834 900,841 907,841 914,834 924,833 930,830 940,831 950,835 960,836 966,832 984,831 990,837 1000,839 1008,839 1013,810 1020,807 1032,796 1038,795 1043,787 1055,786 1062,783 1074,782 1084,785 1098,785 1104,781 1121,778 1127,777 1133,772 1139,771"],
					[RED,2,"883,829 896,833 910,833 918,836 932,832 950,831 964,834 974,835 980,831 990,832 998,835 1014,838 1019,810 1033,810 1040,805 1044,801 1050,790 1060,788 1074,783 1098,784 1106,785 1121,780 1133,778 1139,776"],
					[YEL,1,"883,837 888,841 904,841 911,828 920,828 924,830 930,827 940,835 952,832 964,831 972,830 982,835 990,844 996,841 1001,834 1008,837 1013,799 1020,798 1027,794 1038,793 1043,783 1050,783 1056,786 1062,779 1074,786 1084,784 1098,785 1103,779 1109,783 1116,773 1121,776 1128,773 1133,767 1139,764"]
				]}
		]
	},
	cday:{
		x0:1096,x1:1527,axis:1462,cross:1328,v:[1262,1388],body:4,len:21,foot:842,times:[[1262,"08.10"],[1388,"09.10"]],
		panes:[
			{top:69,bottom:490,main:true,
				ticks:[[127,""],[211,"77,5"],[295,"75"],[378,"72,5"],[462,"70"]],minor:[85,169,253,336,420],last:131,
				levels:[[192,RED],[351,RED],[267,RED,"4 3"],[313,RED,"4 3"],[388,RED,"4 3"]],note:[1244,203,"% 13,82"],
				candles:"1238 207 262 225 262 g,1244 210 235 212 228 r,1250 191 217 209 217 g,1256 207 260 217 231 r,1262 203 235 204 227 g,1268 201 243 204 238 r,1274 225 266 236 263 r,1280 244 288 257 270 r,1286 248 284 250 262 g,1292 218 252 243 251 g,1298 257 290 257 285 r,1304 295 347 295 335 r,1310 318 345 324 338 g,1316 305 340 315 320 r,1322 301 335 304 308 g,1328 270 310 273 302 g,1334 257 288 265 270 r,1340 250 290 268 288 r,1346 285 313 288 296 r,1352 288 310 292 296 r,1358 292 328 300 308 r,1364 292 330 320 322 r,1370 290 321 291 316 g,1376 265 300 268 290 g,1382 258 297 259 280 g,1388 207 254 212 254 g,1394 200 223 y,1400 193 217 208 211 g,1406 195 221 198 201 r,1412 201 218 201 211 r,1418 205 221 211 217 g,1424 145 202 148 200 g,1430 140 160 141 149 g,1436 127 149 131 143 g",
				dots:[["g","1239,309 1246,297 1252,284 1257,277 1263,268 1269,264 1275,262 1389,283 1395,271 1401,260 1407,252 1413,245 1419,242 1425,234 1431,222 1437,209"],["r","1281,260 1287,263 1293,265 1305,275 1311,285 1317,292 1323,297 1329,293 1347,287 1353,287 1359,291 1365,295 1371,299"]],
				lines:[
					["#ffff80",1,"1238,209 1462,155"],
					["#ffff80",1,"1238,251 1462,198"],
					[RED,1,"1253,193 1462,326"],
					[BLUE,2,"1238,285 1244,270 1250,254 1257,253 1262,247 1274,244 1281,243 1286,232 1292,231 1298,236 1304,258 1310,277 1316,287 1322,290 1334,291 1340,302 1358,302 1364,288 1388,288 1392,277 1400,256 1406,246 1412,240 1419,237 1424,225 1430,205 1436,188"],
					[MAG,1,"1238,280 1250,255 1262,235 1274,229 1286,222 1298,217 1306,221 1318,222 1334,218 1342,220 1352,226 1360,236 1370,251 1382,259 1394,253 1406,247 1418,241 1424,232 1437,216"],
					[WHITE,2,"1238,265 1244,250 1251,236 1257,234 1262,228 1269,227 1274,234 1280,244 1286,250 1292,246 1298,255 1304,275 1310,292 1316,304 1322,309 1328,303 1334,292 1340,285 1346,287 1352,292 1358,299 1364,304 1371,305 1376,300 1382,290 1388,272 1394,252 1400,238 1406,230 1412,222 1418,218 1424,204 1430,185 1437,171"]
				]},
			{top:492,bottom:601,
				ticks:[[505,"1"],[537,"0,5"],[569,"0"],[602,"-0,5"]],minor:[521,553,585],
				levels:[[569,"#800000"]],
				updown:["1238,498 1251,495 1256,502 1262,504 1268,515 1274,531 1280,545 1287,549 1293,551 1299,565 1304,584 1310,593 1317,597 1323,594 1329,582 1335,574 1341,573 1353,576 1359,580 1365,585 1371,579 1377,568 1383,560 1389,542 1395,532 1401,526 1407,523 1413,526 1419,529 1425,515 1431,508 1437,503","1238,504 1251,499 1262,502 1268,507 1280,528 1287,537 1294,545 1302,560 1310,576 1317,586 1325,589 1335,580 1345,577 1355,577 1368,582 1376,577 1384,568 1393,552 1402,538 1409,531 1419,530 1425,525 1431,517 1437,512"]},
			{top:603,bottom:679,
				ticks:[[608,"80"],[623,"70"],[639,"60"],[655,"50"],[670,"40"]],minor:[616,631,647,662,677],
				levels:[[623,"#800000"],[655,YEL,"5 4"]],
				updown:["1238,617 1244,619 1251,615 1257,628 1263,621 1269,640 1275,650 1281,653 1287,645 1293,644 1299,660 1305,676 1311,671 1317,669 1323,660 1329,648 1335,647 1341,655 1347,659 1353,661 1365,672 1371,653 1377,642 1383,638 1389,622 1395,622 1401,621 1407,618 1413,626 1419,628 1425,609 1431,608 1437,606"]},
			{top:681,bottom:841,
				ticks:[[686,"80"],[751,"75"],[815,"70"]],minor:[718,783],
				cloud:["1238,764 1252,764 1257,766 1263,760 1269,752 1281,743 1289,733 1299,728 1311,725 1323,726 1332,733 1347,736 1354,748 1371,758 1389,747 1401,746 1407,752 1419,756 1431,750 1437,738","1238,792 1257,792 1263,788 1269,781 1281,780 1293,763 1305,755 1311,750 1323,750 1329,746 1350,746 1360,743 1419,743 1431,746 1437,744"],step:6,
				lines:[
					[GRAY,1,"1238,720 1246,719 1257,715 1263,719 1269,719 1275,695 1281,692"],
					[BLUE,2,"1238,732 1245,732 1251,726 1263,725 1275,727 1281,733 1287,736 1299,736 1305,745 1311,753 1317,762 1323,762 1329,754 1341,745 1353,747 1359,755 1371,757 1383,750 1389,736 1395,734 1401,724 1407,718 1419,717 1425,708 1431,708 1437,700"],
					[RED,2,"1238,752 1245,737 1251,731 1263,729 1275,726 1281,725 1287,731 1299,731 1305,736 1311,746 1323,746 1335,756 1347,752 1365,747 1371,748 1377,756 1389,750 1395,741 1407,733 1413,731 1419,723 1425,718 1431,708 1437,708"],
					[YEL,1,"1238,725 1245,725 1251,718 1257,726 1263,716 1269,728 1275,739 1281,743 1287,735 1293,735 1298,750 1305,766 1311,762 1323,755 1329,743 1335,742 1341,746 1350,751 1358,755 1365,761 1371,750 1377,740 1383,737 1389,719 1397,719 1407,714 1419,719 1425,694 1431,692 1437,688"]
				]}
		]
	}
};

function parse(s){
	return s.split(" ").map(function(p){
		return p.split(",").map(Number);
	});
}
function line(x1,y1,x2,y2,c,dash){
	return '<line x1="'+x1+'" y1="'+y1+'" x2="'+x2+'" y2="'+y2+'" stroke="'+c+'"'+(dash?' stroke-dasharray="'+dash+'"':'')+'/>';
}
function rect(x,y,w,h,c){
	return '<rect x="'+x+'" y="'+y+'" width="'+w+'" height="'+h+'" fill="'+c+'"/>';
}
function text(x,y,t,c){
	return '<text x="'+x+'" y="'+y+'" fill="'+c+'">'+t+'</text>';
}
function poly(s,c,w){
	return '<polyline points="'+s+'" fill="none" stroke="'+c+'" stroke-width="'+w+'"/>';
}
function valueAt(pts,x){
	for(var i=1;i<pts.length;i++){
		if(pts[i][0]>=x){
			var a=pts[i-1],b=pts[i];
			return a[1]+(b[1]-a[1])*(x-a[0])/(b[0]-a[0]);
		}
	}
	return pts[pts.length-1][1];
}
function svg(x,y,w,h,inner){
	return '<svg class="pane" height="'+h+'" viewBox="'+x+' '+y+' '+w+' '+h+'" preserveAspectRatio="xMinYMin slice">'+inner+'</svg>';
}
function candle(s,body){
	var f=s.split(" "),c=f[f.length-1],x=+f[0],hi=+f[1],lo=+f[2],out="";
	if(c=="y"){
		return rect(x,hi,1,lo-hi,YEL)+rect(x-1,Math.round((hi+lo)/2),3,1,RED);
	}
	var bt=f.length>4?+f[3]:Math.round(hi+(lo-hi)/4),bb=f.length>4?+f[4]:Math.round(lo-(lo-hi)/4);
	if(body==2){
		out+=rect(x-1,bt,2,bb-bt,c=="g"?"#00c800":"#d00000");
	}
	else{
		out+=rect(x-2,bt,3,bb-bt,c=="g"?"#00d800":"#e00000")+rect(x+1,bt,2,bb-bt,c=="g"?"#008000":"#800000");
	}
	out+=rect(x,hi,1,lo-hi,c=="g"?GREEN:RED);
	return out;
}
function drawPane(w,p){
	var s="",grid="#303030",i;
	w.v.forEach(function(x){
		s+=line(x+.5,p.top,x+.5,p.bottom,grid,"5 4");
	});
	p.ticks.forEach(function(t){
		s+=line(w.x0+4,t[0]+.5,w.axis-8,t[0]+.5,grid,"5 4");
	});
	(p.levels||[]).forEach(function(l){
		s+=line(w.x0,l[0]+.5,w.axis,l[0]+.5,l[1],l[2]);
	});
	if(p.note){
		s+=text(p.note[0],p.note[1],p.note[2],"#c00000");
	}
	if(p.candles){
		p.candles.split(",").forEach(function(c){
			s+=candle(c,w.body);
		});
	}
	if(p.cloud){
		var a=parse(p.cloud[0]),b=parse(p.cloud[1]);
		for(i=a[0][0]+4;i<a[a.length-1][0];i+=p.step){
			var ya=valueAt(a,i),yb=valueAt(b,i);
			s+=line(i+.5,Math.min(ya,yb),i+.5,Math.max(ya,yb),ya<yb?GREEN:RED,"4 3");
		}
		s+=poly(p.cloud[0],GREEN,1)+poly(p.cloud[1],RED,1);
	}
	(p.dots||[]).forEach(function(d){
		parse(d[1]).forEach(function(pt){
			s+=rect(pt[0]-1,pt[1]-1,w.body==4?3:2,3,d[0]=="g"?"#00ff00":RED);
		});
	});
	(p.lines||[]).forEach(function(l){
		s+=poly(l[2],l[0],l[1]);
	});
	(p.updown||[]).forEach(function(u){
		var pts=parse(u);
		for(i=1;i<pts.length;i++){
			s+=line(pts[i-1][0],pts[i-1][1],pts[i][0],pts[i][1],pts[i][1]<pts[i-1][1]?GREEN:RED);
		}
	});
	s+=rect(w.cross,p.top,1,p.bottom-p.top,"#808080");
	//eksen
	s+=rect(w.axis,p.top,1,p.bottom-p.top,CYAN);
	p.ticks.forEach(function(t){
		s+=rect(w.axis-8,t[0],8,1,CYAN)+text(w.axis+3,t[0]+5,t[1],CYAN);
	});
	p.minor.forEach(function(y){
		s+=rect(w.axis-3,y,3,1,CYAN);
	});
	if(p.last){
		s+=rect(w.axis-w.len,p.last,w.len-1,1,YEL)+text(w.axis+3,p.last+5,"79,875",YEL);
	}
	if(p.title){
		s+='<text class="'+(p.thin?"thin":"title")+'" x="'+(w.x0+4)+'" y="'+(p.top+13)+'" fill="'+YEL+'">'+p.title+'</text>';
	}
	s+=rect(w.x0,p.top,1,p.bottom-p.top,"#8a8a8a");
	if(p.main){
		s+='<rect x="'+(w.x0+1.5)+'" y="'+(p.top+1.5)+'" width="'+(w.x1-w.x0-4)+'" height="'+(p.bottom-p.top-2)+'" fill="none" stroke="#70f070"/>';
	}
	return svg(w.x0,p.top,w.x1-w.x0,p.bottom-p.top,s);
}
document.querySelectorAll("[data-chart]").forEach(function(el){
	var w=charts[el.getAttribute("data-chart")],foot="";
	el.querySelector(".panes").innerHTML=w.panes.map(function(p){
		return drawPane(w,p);
	}).join("");
	w.times.forEach(function(t){
		foot+=rect(t[0],w.foot+3,1,17,WHITE)+text(t[0]+2,w.foot+19,t[1],CYAN);
	});
	el.querySelector(".timeline").insertAdjacentHTML("afterbegin",svg(w.x0,w.foot+1,w.x1-64-w.x0,20,foot));
});
```
